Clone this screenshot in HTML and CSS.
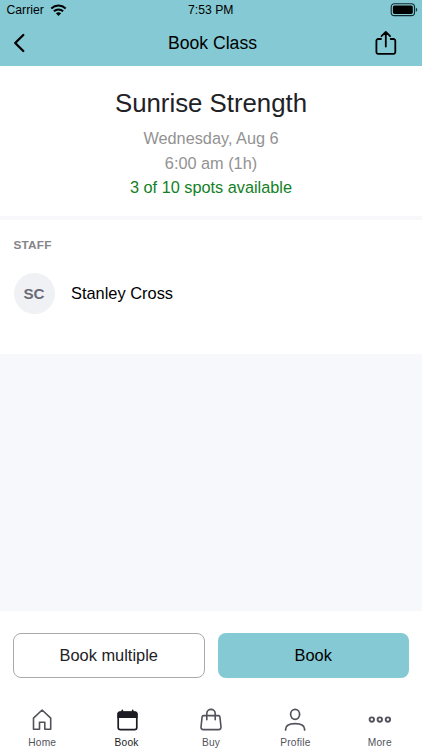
FILE: index.html
```html
<!DOCTYPE html>
<html lang="en">
<head>
<meta charset="utf-8">
<meta name="viewport" content="width=device-width, initial-scale=1">
<title>Book Class</title>
<link rel="stylesheet" href="styles.css">
</head>
<body>
<div class="app">
  <header class="top">
    <div class="status">
      <div class="carrier">
        <span>Carrier</span>
        <svg width="18" height="14" viewBox="0 0 18 14" fill="none" stroke="#000" stroke-width="2"><path d="M1.300 5.400a10.600 10.600 0 0 1 14.400 0M3.900 8.300a6.800 6.800 0 0 1 9.200 0"/><path d="M8.500 12.900 5.900 10.300a4 4 0 0 1 5.200 0z" fill="#000" stroke="none"/></svg>
      </div>
      <span class="time">7:53 PM</span>
      <svg class="battery" width="28" height="14" viewBox="0 0 28 14"><rect x="1.200" y=".8" width="23.300" height="11.800" rx="3.200" fill="none" stroke="#10292d" stroke-width="1.100"/><rect x="2.900" y="2.500" width="19.900" height="8.400" rx="1.600"/><path d="M25.800 4.500c2 .8 2 3.600 0 4.400z" fill="#1c3d42"/></svg>
    </div>
    <div class="nav">
      <svg class="back" width="12" height="20" viewBox="0 0 12 20" fill="none" stroke="#000" stroke-width="2.300" stroke-linecap="round" stroke-linejoin="round"><path d="M10.300 2 2.200 10l8.100 8"/></svg>
      <h1>Book Class</h1>
      <svg class="share" width="22" height="26" viewBox="0 0 22 26" fill="none" stroke="#000" stroke-width="1.800" stroke-linecap="round" stroke-linejoin="round"><path d="M6 9H3.200A1.800 1.800 0 0 0 1.400 10.800v11.300a1.800 1.800 0 0 0 1.800 1.800h15.300a1.800 1.800 0 0 0 1.800-1.800V10.800a1.800 1.800 0 0 0-1.800-1.800H15.700M10.800 16.500V2M6.500 6.200l4.300-4.300 4.300 4.300"/></svg>
    </div>
  </header>
  <section class="summary">
    <h2>Sunrise Strength</h2>
    <p>Wednesday, Aug 6</p>
    <p>6:00 am (1h)</p>
    <p class="spots">3 of 10 spots available</p>
  </section>
  <section class="staff">
    <h3>STAFF</h3>
    <div class="person">
      <span class="avatar">SC</span>
      <span>Stanley Cross</span>
    </div>
  </section>
  <main class="space"></main>
  <div class="actions">
    <button class="outline">Book multiple</button>
    <button class="primary">Book</button>
  </div>
  <nav class="tabs">
    <a class="tab">
      <svg width="24" height="24" viewBox="0 0 24 24" fill="none" stroke="#52525b" stroke-width="1.600" stroke-linejoin="round"><path d="M3.500 10.100 12.100 2l8.600 8.100v11.200h-5.900v-7.100H9.500v7.100h-6z"/></svg>
      <span>Home</span>
    </a>
    <a class="tab active">
      <svg width="24" height="24" viewBox="0 0 24 24"><rect x="3.200" y="4.200" width="18.600" height="17.400" rx="2.200" fill="none" stroke="#1c1c22" stroke-width="1.700"/><path d="M2.400 10V6a2.500 2.500 0 0 1 2.500-2.500h15.200A2.500 2.500 0 0 1 22.600 6v4z" fill="#1c1c22"/><path d="M7.300 4.500V2.300M17.700 4.500V2.300" stroke="#1c1c22" stroke-width="1.700" stroke-linecap="round"/></svg>
      <span>Book</span>
    </a>
    <a class="tab">
      <svg width="24" height="24" viewBox="0 0 24 24" fill="none" stroke="#52525b" stroke-width="1.600" stroke-linejoin="round" stroke-linecap="round"><path d="M4.600 7.600h14.800a1.500 1.500 0 0 1 1.500 1.300L22 19.200a2.200 2.200 0 0 1-2.200 2.400H4.200A2.200 2.200 0 0 1 2 19.200L3.100 8.900a1.500 1.500 0 0 1 1.500-1.300zM7.800 11.700V5.600a4.200 4.200 0 0 1 8.400 0v6.100"/></svg>
      <span>Buy</span>
    </a>
    <a class="tab">
      <svg width="24" height="24" viewBox="0 0 24 24" fill="none" stroke="#52525b" stroke-width="1.700" stroke-linecap="round"><ellipse cx="12.100" cy="6.300" rx="4.500" ry="5"/><path d="M2.600 21.900v-.6c0-3.300 3.400-5.700 9.500-5.700s9.500 2.400 9.500 5.700v.6"/></svg>
      <span>Profile</span>
    </a>
    <a class="tab">
      <svg width="24" height="24" viewBox="0 0 24 24" fill="none" stroke="#52525b" stroke-width="1.900"><circle cx="3.800" cy="11.600" r="2.200"/><circle cx="11.800" cy="11.600" r="2.200"/><circle cx="19.900" cy="11.600" r="2.200"/></svg>
      <span>More</span>
    </a>
  </nav>
</div>
</body>
</html>
```
FILE: styles.css
```css
* { box-sizing: border-box; }
body {
  margin: 0;
  font-family: "Liberation Sans", Arial, sans-serif;
  background: #fff;
  color: #000;
}
svg { display: block; flex: none; }
h1, h2, h3, p { margin: 0; font-weight: 400; }
.app {
  display: flex;
  flex-direction: column;
  width: 422px;
  height: 750px;
  overflow: hidden;
}
.top { height: 66px; flex: none; background: #84c9d3; }
.status {
  display: grid;
  grid-template-columns: 1fr auto 1fr;
  align-items: center;
  height: 20px;
  padding: 0 4px 0 6.5px;
  font-size: 12.2px;
}
.carrier { display: flex; align-items: center; gap: 6px; }
.time { margin-left: -3px; }
.battery { justify-self: end; }
.nav {
  display: grid;
  grid-template-columns: 1fr auto 1fr;
  align-items: center;
  height: 46px;
  padding: 0 25px 0 13px;
}
h1 { font-size: 17.6px; padding-left: 15px; }
.share { justify-self: end; }
.summary {
  flex: none;
  height: 154px;
  padding-top: 20px;
  border-bottom: 4px solid #f8f8fb;
  text-align: center;
}
h2 { font-size: 25.8px; line-height: 34px; color: #222226; margin-bottom: 6px; }
.summary p { font-size: 16.3px; line-height: 24.5px; color: #929292; }
.summary .spots { color: #128026; }
.staff { flex: none; height: 134px; padding: 17px 13.5px 0; }
h3 { font-size: 11.8px; line-height: 16px; font-weight: 700; color: #858589; letter-spacing: .2px; }
.person { display: flex; align-items: center; gap: 16.5px; margin-top: 19.5px; font-size: 16.4px; }
.avatar {
  display: flex;
  align-items: center;
  justify-content: center;
  width: 41px;
  height: 41px;
  border-radius: 50%;
  background: #f0f1f4;
  color: #6b6b76;
  font-size: 15.2px;
  font-weight: 700;
}
.space { height: 257px; flex: none; background: #f7f8fb; }
.actions {
  display: grid;
  grid-template-columns: 1fr 1fr;
  gap: 13px;
  flex: none;
  height: 89px;
  padding: 22px 13px;
}
button {
  font: 16.4px "Liberation Sans", Arial, sans-serif;
  border-radius: 8px;
  padding: 0;
}
.outline { background: #fff; border: 1px solid #aaa; color: #222226; }
.primary { background: #84c9d3; border: 0; color: #000; }
.tabs { display: grid; grid-template-columns: repeat(5, 1fr); flex: 1; padding-top: 8px; }
.tab {
  display: flex;
  flex-direction: column;
  align-items: center;
  gap: 4px;
  font-size: 10.2px;
  line-height: 14px;
  letter-spacing: .2px;
  color: #52525b;
}
.active { color: #1c1c22; }
```
